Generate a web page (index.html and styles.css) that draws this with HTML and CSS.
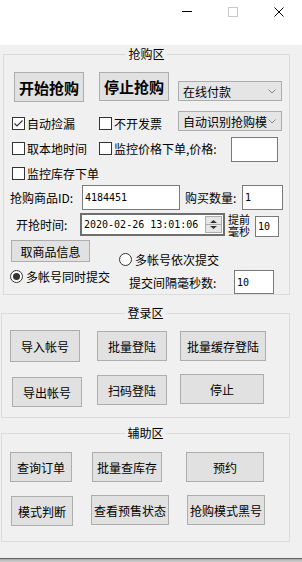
FILE: index.html
```html
<!DOCTYPE html>
<html>
<head>
    <meta charset="UTF-8">
    <title>抢购助手</title>
    <link rel="stylesheet" href="styles.css">
</head>
<body>
    <!-- window caption buttons -->
    <div class="titlebar">
        <span class="caption-btn"><svg width="10" height="10"><line x1="0" y1="4.5" x2="10" y2="4.5" stroke="#000" stroke-width="1"/></svg></span>
        <span class="caption-btn"><svg width="10" height="10"><rect x="0.5" y="0.5" width="9" height="9" fill="none" stroke="#c8c8c8"/></svg></span>
        <span class="caption-btn"><svg width="10" height="10"><path d="M0.5 0.5 L9.5 9.5 M9.5 0.5 L0.5 9.5" stroke="#000" stroke-width="1"/></svg></span>
    </div>

    <div class="window">
        <!-- buy area -->
        <div class="group group-buy">
            <div class="legend">抢购区</div>

            <div class="row row-a">
                <button class="btn btn-big btn-start">开始抢购</button>
                <button class="btn btn-big btn-stop">停止抢购</button>
                <div class="combo combo-pay">
                    <span>在线付款</span>
                    <svg width="8" height="5"><path d="M0.5 0.5 L4 4 L7.5 0.5" fill="none" stroke="#888"/></svg>
                </div>
            </div>

            <div class="row row-b">
                <label class="check col1">
                    <span class="box"><svg width="11" height="11"><path d="M1.5 5.5 L4 8 L9.5 2.5" fill="none" stroke="#333" stroke-width="1.2"/></svg></span>自动捡漏
                </label>
                <label class="check col2"><span class="box"></span>不开发票</label>
                <div class="combo combo-mode">
                    <span>自动识别抢购模</span>
                    <svg width="8" height="5"><path d="M0.5 0.5 L4 4 L7.5 0.5" fill="none" stroke="#888"/></svg>
                </div>
            </div>

            <div class="row row-c">
                <label class="check col1"><span class="box"></span>取本地时间</label>
                <label class="check col2 col2-wide"><span class="box"></span>监控价格下单,价格:</label>
                <input class="field field-price" type="text">
            </div>

            <div class="row row-d">
                <label class="check col1"><span class="box"></span>监控库存下单</label>
            </div>

            <div class="row row-e">
                <span class="text label-id">抢购商品ID:</span>
                <input class="field field-id" type="text" value="4184451">
                <span class="text label-qty">购买数量:</span>
                <input class="field field-qty" type="text" value="1">
            </div>

            <div class="row row-f">
                <span class="text label-time">开抢时间:</span>
                <div class="datetime">
                    <span class="stamp">2020-02-26 13:01:06</span>
                    <span class="spin">
                        <svg width="15" height="15"><path d="M4 6 L7.5 3 L11 6 Z M4 9 L7.5 12 L11 9 Z" fill="#333"/><line x1="0" y1="7.5" x2="15" y2="7.5" stroke="#adadad"/></svg>
                    </span>
                </div>
                <span class="text label-ahead">提前<br>毫秒</span>
                <input class="field field-ahead" type="text" value="10">
            </div>

            <div class="row row-g">
                <div class="col-left">
                    <button class="btn btn-info">取商品信息</button>
                    <label class="radio radio-same"><span class="dot checked"></span>多帐号同时提交</label>
                </div>
                <div class="col-right">
                    <label class="radio"><span class="dot"></span>多帐号依次提交</label>
                    <div class="interval">
                        <span class="text label-interval">提交间隔毫秒数:</span>
                        <input class="field field-interval" type="text" value="10">
                    </div>
                </div>
            </div>
        </div>

        <!-- login area -->
        <div class="group group-login">
            <div class="legend">登录区</div>
            <div class="row login-1">
                <button class="btn b-import">导入帐号</button>
                <button class="btn b-batch">批量登陆</button>
                <button class="btn b-cache">批量缓存登陆</button>
            </div>
            <div class="row login-2">
                <button class="btn b-export">导出帐号</button>
                <button class="btn b-scan">扫码登陆</button>
                <button class="btn b-halt">停止</button>
            </div>
        </div>

        <!-- helper area -->
        <div class="group group-help">
            <div class="legend">辅助区</div>
            <div class="row help-1">
                <button class="btn h-order">查询订单</button>
                <button class="btn h-stock">批量查库存</button>
                <button class="btn h-book">预约</button>
            </div>
            <div class="row help-2">
                <button class="btn h-judge">模式判断</button>
                <button class="btn h-presale">查看预售状态</button>
                <button class="btn h-black">抢购模式黑号</button>
            </div>
        </div>
    </div>
    <div class="shadow"></div>
</body>
</html>
```

FILE: styles.css
```css
/* Basic reset */
* {
    box-sizing: border-box;
}

body {
    margin: 0;
    width: 302px;
    height: 562px;
    overflow: hidden;
    background-color: #fff;
    font-family: "Noto Sans CJK SC", sans-serif;
    font-size: 12px;
    color: #000;
}

/* Title bar with min / max / close */
.titlebar {
    height: 45px;
    display: flex;
    justify-content: flex-end;
    align-items: flex-start;
}

.caption-btn {
    width: 46px;
    height: 23px;
    display: flex;
    align-items: center;
    justify-content: center;
}

.caption-btn svg {
    display: block;
}

/* Dialog body */
.window {
    background-color: #f0f0f0;
    height: 514px;
    padding-top: 9px;
    border-bottom: 1px solid #646464;
}

.shadow {
    height: 3px;
    background: linear-gradient(#a9a9a9, #d4d4d4);
}

/* Group boxes */
.group {
    border: 1px solid #dcdcdc;
}

.legend {
    width: fit-content;
    height: 16px;
    line-height: 16px;
    margin: -9px auto 0;
    padding: 0 2px;
    background-color: #f0f0f0;
}

.group-buy {
    margin-left: 3px;
    width: 287px;
    height: 241px;
}

.group-login {
    margin-top: 18px;
    margin-left: 1px;
    width: 289px;
    height: 105px;
}

.group-help {
    margin-top: 15px;
    margin-left: 1px;
    width: 289px;
    height: 109px;
}

.row {
    display: flex;
    align-items: flex-start;
}

.text {
    white-space: nowrap;
}

/* Buttons */
.btn {
    font-family: inherit;
    font-size: 12px;
    color: #000;
    background-color: #e1e1e1;
    border: 1px solid #adadad;
    padding: 0;
    height: 30px;
    flex-shrink: 0;
}

.btn-big {
    font-size: 15px;
    font-weight: bold;
}

/* Combo boxes */
.combo {
    display: flex;
    align-items: center;
    justify-content: space-between;
    height: 20px;
    padding: 0 5px 0 4px;
    background-color: #e5e5e5;
    border: 1px solid #acacac;
    white-space: nowrap;
    overflow: hidden;
}

.combo svg {
    flex-shrink: 0;
}

/* Text inputs */
.field {
    height: 25px;
    padding: 0 2px;
    border: 1px solid #7a7a7a;
    background-color: #fff;
    font-family: "DejaVu Sans Mono", monospace;
    font-size: 10px;
    color: #000;
    outline: none;
    flex-shrink: 0;
}

/* Check boxes */
.check {
    display: flex;
    align-items: center;
    height: 13px;
    white-space: nowrap;
    flex-shrink: 0;
}

.box {
    width: 13px;
    height: 13px;
    margin-right: 2px;
    border: 1px solid #333;
    background-color: #fff;
    flex-shrink: 0;
}

.box svg {
    display: block;
}

.col1 {
    margin-left: 8px;
    width: 87px;
}

.col2 {
    width: 79px;
}

.col2-wide {
    width: 132px;
}

/* Radio buttons */
.radio {
    display: flex;
    align-items: center;
    height: 13px;
    white-space: nowrap;
}

.dot {
    width: 13px;
    height: 13px;
    margin-right: 3px;
    border: 1px solid #333;
    border-radius: 50%;
    background-color: #fff;
    display: flex;
    align-items: center;
    justify-content: center;
    flex-shrink: 0;
}

.dot.checked::after {
    content: "";
    width: 7px;
    height: 7px;
    border-radius: 50%;
    background-color: #333;
}

/* Buy area rows */
.row-a {
    margin-top: 10px;
    height: 30px;
}

.btn-start {
    margin-left: 10px;
    width: 70px;
}

.btn-stop {
    margin-left: 15px;
    width: 70px;
    height: 29px;
}

.combo-pay {
    margin-left: 9px;
    margin-top: 9px;
    width: 104px;
}

.row-b {
    margin-top: 9px;
    height: 20px;
}

.row-b .check {
    margin-top: 6px;
}

.combo-mode {
    width: 104px;
}

.row-c {
    margin-top: 6px;
    height: 25px;
}

.row-c .check {
    margin-top: 5px;
}

.field-price {
    width: 47px;
}

.row-d {
    margin-top: 5px;
    height: 13px;
}

.row-e {
    margin-top: 5px;
    height: 25px;
    line-height: 25px;
}

.label-id {
    margin-left: 6px;
    width: 72px;
}

.field-id {
    width: 98px;
}

.label-qty {
    margin-left: 5px;
    width: 57px;
}

.field-qty {
    width: 41px;
}

.row-f {
    margin-top: 3px;
    height: 23px;
}

.label-time {
    margin-left: 12px;
    width: 64px;
    line-height: 23px;
}

.datetime {
    width: 145px;
    height: 23px;
    display: flex;
    align-items: center;
    justify-content: space-between;
    padding: 0 1px 0 2px;
    background-color: #fff;
    border: 2px solid #6e6e6e;
    font-family: "DejaVu Sans Mono", monospace;
    font-size: 10px;
    flex-shrink: 0;
}

.stamp {
    white-space: pre;
}

.spin {
    width: 17px;
    height: 17px;
    background-color: #e6e6e6;
    border: 1px solid #adadad;
    flex-shrink: 0;
}

.spin svg {
    display: block;
}

.label-ahead {
    margin-left: 3px;
    width: 27px;
    font-size: 11px;
    line-height: 12px;
}

.field-ahead {
    margin-top: 3px;
    width: 24px;
    height: 21px;
}

.row-g {
    margin-top: 4px;
}

.col-left {
    margin-left: 6px;
    width: 109px;
}

.btn-info {
    display: block;
    margin-left: 1px;
    width: 79px;
    height: 22px;
}

.radio-same {
    margin-top: 8px;
}

.col-right {
    padding-top: 13px;
}

.interval {
    display: flex;
    align-items: center;
    margin-top: 4px;
}

.label-interval {
    margin-left: 10px;
    width: 105px;
}

.field-interval {
    width: 40px;
    height: 24px;
}

/* Login area */
.login-1 {
    margin-top: 9px;
    height: 32px;
}

.b-import {
    margin-left: 8px;
    width: 70px;
    height: 32px;
}

.b-batch {
    margin-left: 17px;
    margin-top: 1px;
    width: 70px;
}

.b-cache {
    margin-left: 13px;
    margin-top: 1px;
    width: 86px;
}

.login-2 {
    margin-top: 12px;
}

.b-export {
    margin-left: 10px;
    margin-top: 3px;
    width: 70px;
}

.b-scan {
    margin-left: 15px;
    margin-top: 1px;
    width: 70px;
}

.b-halt {
    margin-left: 13px;
    width: 84px;
}

/* Helper area */
.help-1 {
    margin-top: 11px;
    height: 30px;
}

.h-order {
    margin-left: 8px;
    width: 62px;
}

.h-stock {
    margin-left: 20px;
    width: 70px;
}

.h-book {
    margin-left: 24px;
    width: 78px;
}

.help-2 {
    margin-top: 13px;
}

.h-judge {
    margin-left: 9px;
    margin-top: 1px;
    width: 62px;
}

.h-presale {
    margin-left: 18px;
    width: 78px;
}

.h-black {
    margin-left: 18px;
    width: 78px;
}
```
